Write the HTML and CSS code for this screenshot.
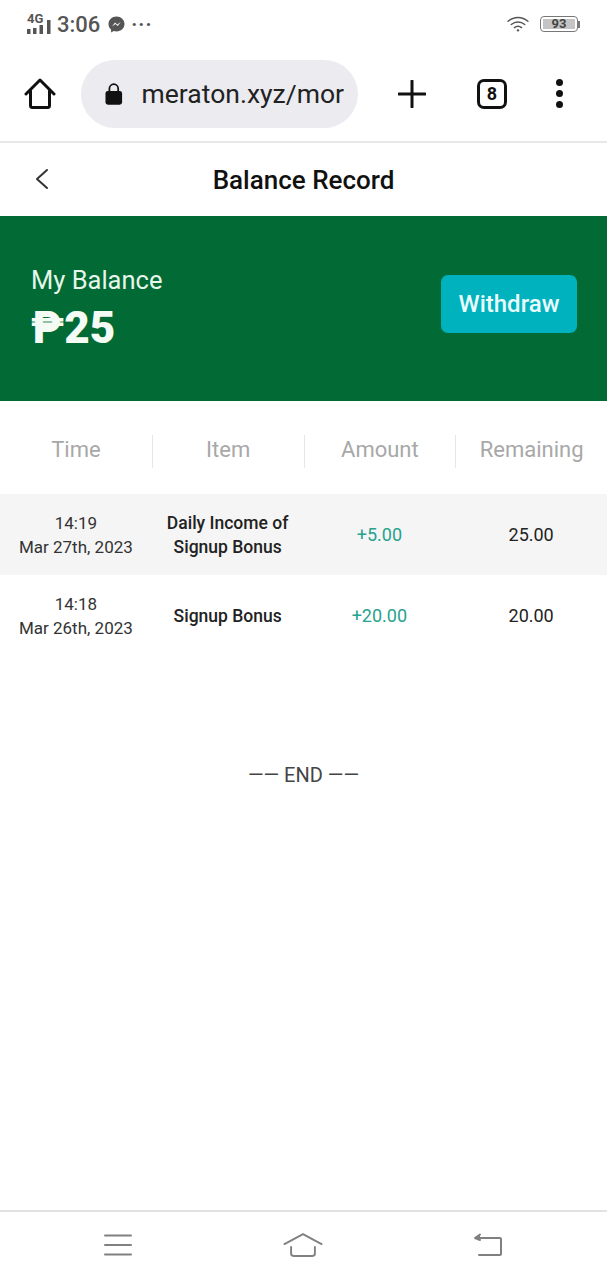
FILE: index.html
```html
<!DOCTYPE html>
<html lang="en">
  <head>
    <meta charset="UTF-8" />
    <meta name="viewport" content="width=device-width, initial-scale=1.0" />
    <title>Balance Record</title>
    <link rel="stylesheet" href="styles.css">
  </head>
  <body>
    <div class="screen">
      <!-- phone status bar -->
      <div class="status-bar">
        <div class="status-left">
          <div class="signal">
            <span class="signal-label">4G</span>
            <svg width="24" height="14" viewBox="0 0 24 14">
              <rect x="0" y="9" width="3.500" height="5" fill="#555" />
              <rect x="6" y="8" width="3.500" height="6" fill="#555" />
              <rect x="12.500" y="5" width="3.500" height="9" fill="#555" />
              <rect x="20" y="0" width="3.500" height="14" fill="#555" />
            </svg>
          </div>
          <span class="clock">3:06</span>
          <svg class="messenger" width="17" height="17" viewBox="0 0 17 17">
            <path d="M8.500.5C4 .5.500 3.700.500 8c0 2.300 1 4.200 2.600 5.600V16.500l2.700-1.500c.8.2 1.800.4 2.700.4 4.500 0 8-3.200 8-7.400S13 .5 8.500.5z" fill="#555" />
            <path d="M4 10.500l3-4 2.200 2 3.500-2.500-3 4-2.200-2z" fill="#fff" />
          </svg>
          <span class="more-dots">···</span>
        </div>
        <div class="status-right">
          <svg width="24" height="18" viewBox="0 0 26 20" fill="none" stroke="#555" stroke-width="1.600" stroke-linecap="round">
            <path d="M2 7c6.500-5.500 15.500-5.500 22 0" />
            <path d="M5.500 10.500c4.500-3.700 10.500-3.700 15 0" />
            <path d="M9 14c2.500-2 5.500-2 8 0" />
            <circle cx="13" cy="17" r="1.300" fill="#555" stroke="none" />
          </svg>
          <div class="battery">
            <div class="battery-body"><span class="battery-level">93</span></div>
            <div class="battery-tip"></div>
          </div>
        </div>
      </div>

      <!-- browser toolbar -->
      <div class="toolbar">
        <svg class="tool-home" width="32" height="32" viewBox="0 0 32 32" fill="none" stroke="#111" stroke-width="3" stroke-linejoin="round" stroke-linecap="round">
          <path d="M2 16L16 2l14 14" />
          <path d="M6.500 13v14.500a2 2 0 0 0 2 2h15a2 2 0 0 0 2-2V13" />
        </svg>
        <div class="url-pill">
          <svg width="18" height="24" viewBox="0 0 18 24">
            <path d="M4.500 10V6.500a4.500 4.500 0 0 1 9 0V10" fill="none" stroke="#111" stroke-width="1.800" />
            <rect x="0.500" y="9" width="17" height="14" rx="2.500" fill="#111" />
          </svg>
          <span class="url-text">meraton.xyz/mor</span>
        </div>
        <svg class="tool-plus" width="28" height="28" viewBox="0 0 28 28" stroke="#111" stroke-width="3" stroke-linecap="round">
          <path d="M1 14h26M14 1v26" />
        </svg>
        <div class="tab-count">8</div>
        <div class="kebab"><i></i><i></i><i></i></div>
      </div>

      <!-- page header -->
      <div class="page-header">
        <svg class="back" width="14" height="22" viewBox="0 0 14 22" fill="none" stroke="#333" stroke-width="2" stroke-linecap="round" stroke-linejoin="round">
          <path d="M12 2L2 11l10 9" />
        </svg>
        <h1>Balance Record</h1>
      </div>

      <div class="balance">
        <div class="balance-info">
          <div class="balance-label">My Balance</div>
          <div class="balance-value">₱25</div>
        </div>
        <button class="withdraw">Withdraw</button>
      </div>

      <div class="record-head">
        <div class="head-cell">Time</div>
        <div class="head-cell">Item</div>
        <div class="head-cell">Amount</div>
        <div class="head-cell">Remaining</div>
      </div>

      <div class="record-row striped">
        <div class="cell date">14:19<br>Mar 27th, 2023</div>
        <div class="cell item">Daily Income of<br>Signup Bonus</div>
        <div class="cell amount">+5.00</div>
        <div class="cell remain">25.00</div>
      </div>
      <div class="record-row">
        <div class="cell date">14:18<br>Mar 26th, 2023</div>
        <div class="cell item">Signup Bonus</div>
        <div class="cell amount">+20.00</div>
        <div class="cell remain">20.00</div>
      </div>

      <div class="end-note">—— END ——</div>

      <!-- phone navigation -->
      <div class="nav-bar">
        <svg width="30" height="22" viewBox="0 0 30 22" stroke="#808080" stroke-width="2" stroke-linecap="round">
          <path d="M2 1.500h26M2 11h26M2 20.500h26" />
        </svg>
        <svg width="40" height="26" viewBox="0 0 42 26" fill="none" stroke="#808080" stroke-width="2" stroke-linecap="round" stroke-linejoin="round">
          <path d="M1.500 12L21 1.500 40.500 12" />
          <path d="M8.500 15v7a2.500 2.500 0 0 0 2.500 2.500h20a2.500 2.500 0 0 0 2.500-2.500v-7" />
        </svg>
        <svg width="30" height="24" viewBox="0 0 30 24" fill="none" stroke="#808080" stroke-width="2" stroke-linecap="round" stroke-linejoin="round">
          <path d="M3 5h24a1 1 0 0 1 1 1v15a1 1 0 0 1-1 1H6" />
          <path d="M7 1.500L2 5l5 2" fill="#808080" />
        </svg>
      </div>
    </div>
  </body>
</html>
```

FILE: styles.css
```css
* {
  box-sizing: border-box;
}
body {
  margin: 0;
  background-color: #fff;
  font-family: Roboto, "Noto Sans", Arial, sans-serif;
}
.screen {
  width: 607px;
  height: 1280px;
  display: flex;
  flex-direction: column;
  overflow: hidden;
}
.status-bar {
  height: 46px;
  padding: 2px 27px 0 27px;
  display: flex;
  justify-content: space-between;
  align-items: center;
}
.status-left,
.status-right {
  display: flex;
  align-items: center;
}
.signal {
  position: relative;
  width: 24px;
  height: 20px;
  display: flex;
  align-items: flex-end;
}
.signal svg {
  display: block;
}
.signal-label {
  position: absolute;
  top: -1px;
  left: 0;
  font-size: 13px;
  font-weight: 700;
  line-height: 12px;
  color: #555;
}
.clock {
  margin-left: 6px;
  font-size: 22px;
  font-weight: 500;
  color: #555;
}
.messenger {
  margin-left: 8px;
}
.more-dots {
  margin-left: 6px;
  font-size: 20px;
  font-weight: 700;
  letter-spacing: 1px;
  color: #555;
}
.status-right {
  gap: 10px;
}
.battery {
  display: flex;
  align-items: center;
}
.battery-body {
  width: 38px;
  height: 16px;
  padding: 2px;
  border: 1px solid #777;
  border-radius: 4px;
  display: flex;
}
.battery-level {
  flex: 1;
  background-color: #c4c4c4;
  font-size: 13px;
  font-weight: 700;
  line-height: 10px;
  text-align: center;
  color: #444;
}
.battery-tip {
  width: 2px;
  height: 7px;
  background-color: #777;
}
.toolbar {
  height: 97px;
  padding: 0 39px 0 24px;
  border-bottom: 2px solid #e8e8e8;
  display: flex;
  align-items: center;
}
.url-pill {
  width: 277px;
  height: 68px;
  margin-left: 25px;
  padding: 0 14px 0 24px;
  border-radius: 34px;
  background-color: #ebebf0;
  display: flex;
  align-items: center;
  gap: 19px;
}
.url-text {
  font-size: 26.500px;
  color: #222;
  white-space: nowrap;
}
.tool-plus {
  margin-left: 40px;
}
.tab-count {
  width: 30px;
  height: 30px;
  margin-left: 51px;
  border: 3px solid #111;
  border-radius: 7px;
  font-size: 18px;
  font-weight: 700;
  line-height: 24px;
  text-align: center;
  color: #111;
}
.kebab {
  margin-left: 49px;
  display: flex;
  flex-direction: column;
  gap: 4px;
}
.kebab i {
  display: block;
  width: 7px;
  height: 7px;
  border-radius: 50%;
  background-color: #111;
}
.page-header {
  height: 73px;
  padding-left: 35px;
  display: flex;
  align-items: center;
  position: relative;
}
.back {
  margin-bottom: 2px;
}
.page-header h1 {
  position: absolute;
  left: 0;
  right: 0;
  margin: 0;
  font-size: 26px;
  font-weight: 500;
  text-align: center;
  color: #111;
}
.balance {
  height: 185px;
  padding: 0 30px 10px 31px;
  background-color: #026a35;
  display: flex;
  justify-content: space-between;
  align-items: center;
}
.balance-info {
  padding-top: 7px;
}
.balance-label {
  font-size: 25.500px;
  color: #e6f6ea;
}
.balance-value {
  margin-top: 11px;
  font-size: 44px;
  font-weight: 900;
  line-height: 44px;
  color: #f4fbf5;
}
.withdraw {
  width: 136px;
  height: 58px;
  border: none;
  border-radius: 7px;
  background-color: #00b2bd;
  font-family: inherit;
  font-size: 24px;
  font-weight: 500;
  color: #e9fbfb;
}
.record-head {
  height: 93px;
  padding-top: 7px;
  display: grid;
  grid-template-columns: repeat(4, 1fr);
  align-items: center;
}
.head-cell {
  height: 33px;
  border-left: 1px solid #e6e6e6;
  font-size: 22px;
  line-height: 30px;
  text-align: center;
  color: #a8a8a8;
}
.head-cell:first-child {
  border-left: none;
}
.record-row {
  height: 81px;
  display: grid;
  grid-template-columns: repeat(4, 1fr);
  align-items: center;
}
.striped {
  background-color: #f5f5f5;
}
.cell {
  font-size: 18px;
  line-height: 24px;
  text-align: center;
  color: #222;
}
.date {
  font-size: 17px;
  color: #333;
}
.item {
  font-size: 17.500px;
  font-weight: 500;
}
.amount {
  color: #26a28d;
}
.end-note {
  margin-top: 107px;
  font-size: 20px;
  line-height: 24px;
  text-align: center;
  color: #444;
}
.nav-bar {
  margin-top: auto;
  height: 70px;
  padding: 0 104px 2px 103px;
  border-top: 2px solid #e2e2e2;
  display: flex;
  justify-content: space-between;
  align-items: center;
}
```
